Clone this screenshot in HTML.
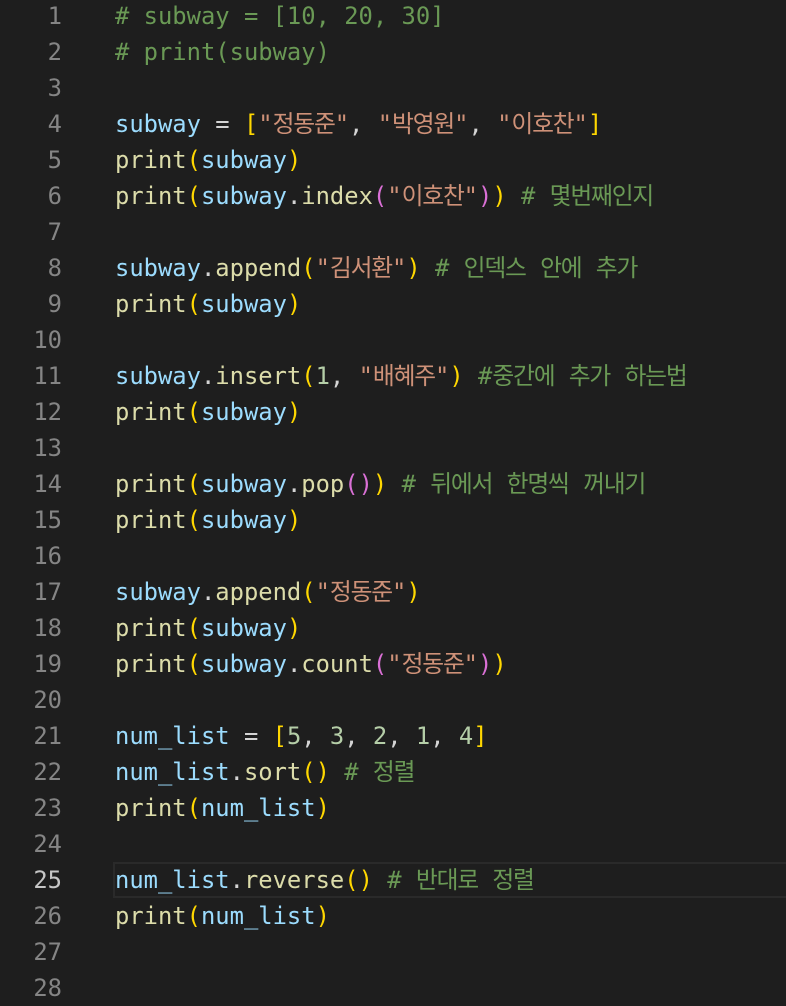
<!DOCTYPE html>
<html><head><meta charset="utf-8"><style>
html,body{margin:0;padding:0;background:#1e1e1e;width:786px;height:1004px;overflow:hidden}
.ed{position:absolute;top:-2px;left:0;width:786px;font-family:"DejaVu Sans Mono","Liberation Mono","Noto Sans CJK KR",monospace;font-size:23.8px;line-height:36px}
.l{height:36px;position:relative}
.n{position:absolute;left:0;width:62px;text-align:right;color:#858585}
.a .n{color:#c6c6c6}
.c{position:absolute;left:115px;color:#d4d4d4;white-space:pre}
.a::before{content:"";position:absolute;left:113px;right:-2px;top:0;height:32px;border:2px solid #2a2a2a}
.cm{color:#6a9955}.v{color:#9cdcfe}.s{color:#ce9178}.f{color:#dcdcaa}.b{color:#ffd700}.p{color:#da70d6}.nu{color:#b5cea8}
.k{letter-spacing:-1.2px}
</style></head><body><div class="ed">
<div class="l"><span class="n">1</span><span class="c"><span class="cm"># subway = [10, 20, 30]</span></span></div>
<div class="l"><span class="n">2</span><span class="c"><span class="cm"># print(subway)</span></span></div>
<div class="l"><span class="n">3</span></div>
<div class="l"><span class="n">4</span><span class="c"><span class="v">subway</span> = <span class="b">[</span><span class="s">"<span class="k">정동준</span>"</span>, <span class="s">"<span class="k">박영원</span>"</span>, <span class="s">"<span class="k">이호찬</span>"</span><span class="b">]</span></span></div>
<div class="l"><span class="n">5</span><span class="c"><span class="f">print</span><span class="b">(</span><span class="v">subway</span><span class="b">)</span></span></div>
<div class="l"><span class="n">6</span><span class="c"><span class="f">print</span><span class="b">(</span><span class="v">subway</span>.<span class="f">index</span><span class="p">(</span><span class="s">"<span class="k">이호찬</span>"</span><span class="p">)</span><span class="b">)</span> <span class="cm"># <span class="k">몇번째인지</span></span></span></div>
<div class="l"><span class="n">7</span></div>
<div class="l"><span class="n">8</span><span class="c"><span class="v">subway</span>.<span class="f">append</span><span class="b">(</span><span class="s">"<span class="k">김서환</span>"</span><span class="b">)</span> <span class="cm"># <span class="k">인덱스</span> <span class="k">안에</span> <span class="k">추가</span></span></span></div>
<div class="l"><span class="n">9</span><span class="c"><span class="f">print</span><span class="b">(</span><span class="v">subway</span><span class="b">)</span></span></div>
<div class="l"><span class="n">10</span></div>
<div class="l"><span class="n">11</span><span class="c"><span class="v">subway</span>.<span class="f">insert</span><span class="b">(</span><span class="nu">1</span>, <span class="s">"<span class="k">배혜주</span>"</span><span class="b">)</span> <span class="cm">#<span class="k">중간에</span> <span class="k">추가</span> <span class="k">하는법</span></span></span></div>
<div class="l"><span class="n">12</span><span class="c"><span class="f">print</span><span class="b">(</span><span class="v">subway</span><span class="b">)</span></span></div>
<div class="l"><span class="n">13</span></div>
<div class="l"><span class="n">14</span><span class="c"><span class="f">print</span><span class="b">(</span><span class="v">subway</span>.<span class="f">pop</span><span class="p">()</span><span class="b">)</span> <span class="cm"># <span class="k">뒤에서</span> <span class="k">한명씩</span> <span class="k">꺼내기</span></span></span></div>
<div class="l"><span class="n">15</span><span class="c"><span class="f">print</span><span class="b">(</span><span class="v">subway</span><span class="b">)</span></span></div>
<div class="l"><span class="n">16</span></div>
<div class="l"><span class="n">17</span><span class="c"><span class="v">subway</span>.<span class="f">append</span><span class="b">(</span><span class="s">"<span class="k">정동준</span>"</span><span class="b">)</span></span></div>
<div class="l"><span class="n">18</span><span class="c"><span class="f">print</span><span class="b">(</span><span class="v">subway</span><span class="b">)</span></span></div>
<div class="l"><span class="n">19</span><span class="c"><span class="f">print</span><span class="b">(</span><span class="v">subway</span>.<span class="f">count</span><span class="p">(</span><span class="s">"<span class="k">정동준</span>"</span><span class="p">)</span><span class="b">)</span></span></div>
<div class="l"><span class="n">20</span></div>
<div class="l"><span class="n">21</span><span class="c"><span class="v">num_list</span> = <span class="b">[</span><span class="nu">5</span>, <span class="nu">3</span>, <span class="nu">2</span>, <span class="nu">1</span>, <span class="nu">4</span><span class="b">]</span></span></div>
<div class="l"><span class="n">22</span><span class="c"><span class="v">num_list</span>.<span class="f">sort</span><span class="b">()</span> <span class="cm"># <span class="k">정렬</span></span></span></div>
<div class="l"><span class="n">23</span><span class="c"><span class="f">print</span><span class="b">(</span><span class="v">num_list</span><span class="b">)</span></span></div>
<div class="l"><span class="n">24</span></div>
<div class="l a"><span class="n">25</span><span class="c"><span class="v">num_list</span>.<span class="f">reverse</span><span class="b">()</span> <span class="cm"># <span class="k">반대로</span> <span class="k">정렬</span></span></span></div>
<div class="l"><span class="n">26</span><span class="c"><span class="f">print</span><span class="b">(</span><span class="v">num_list</span><span class="b">)</span></span></div>
<div class="l"><span class="n">27</span></div>
<div class="l"><span class="n">28</span></div>
</div></body></html>
